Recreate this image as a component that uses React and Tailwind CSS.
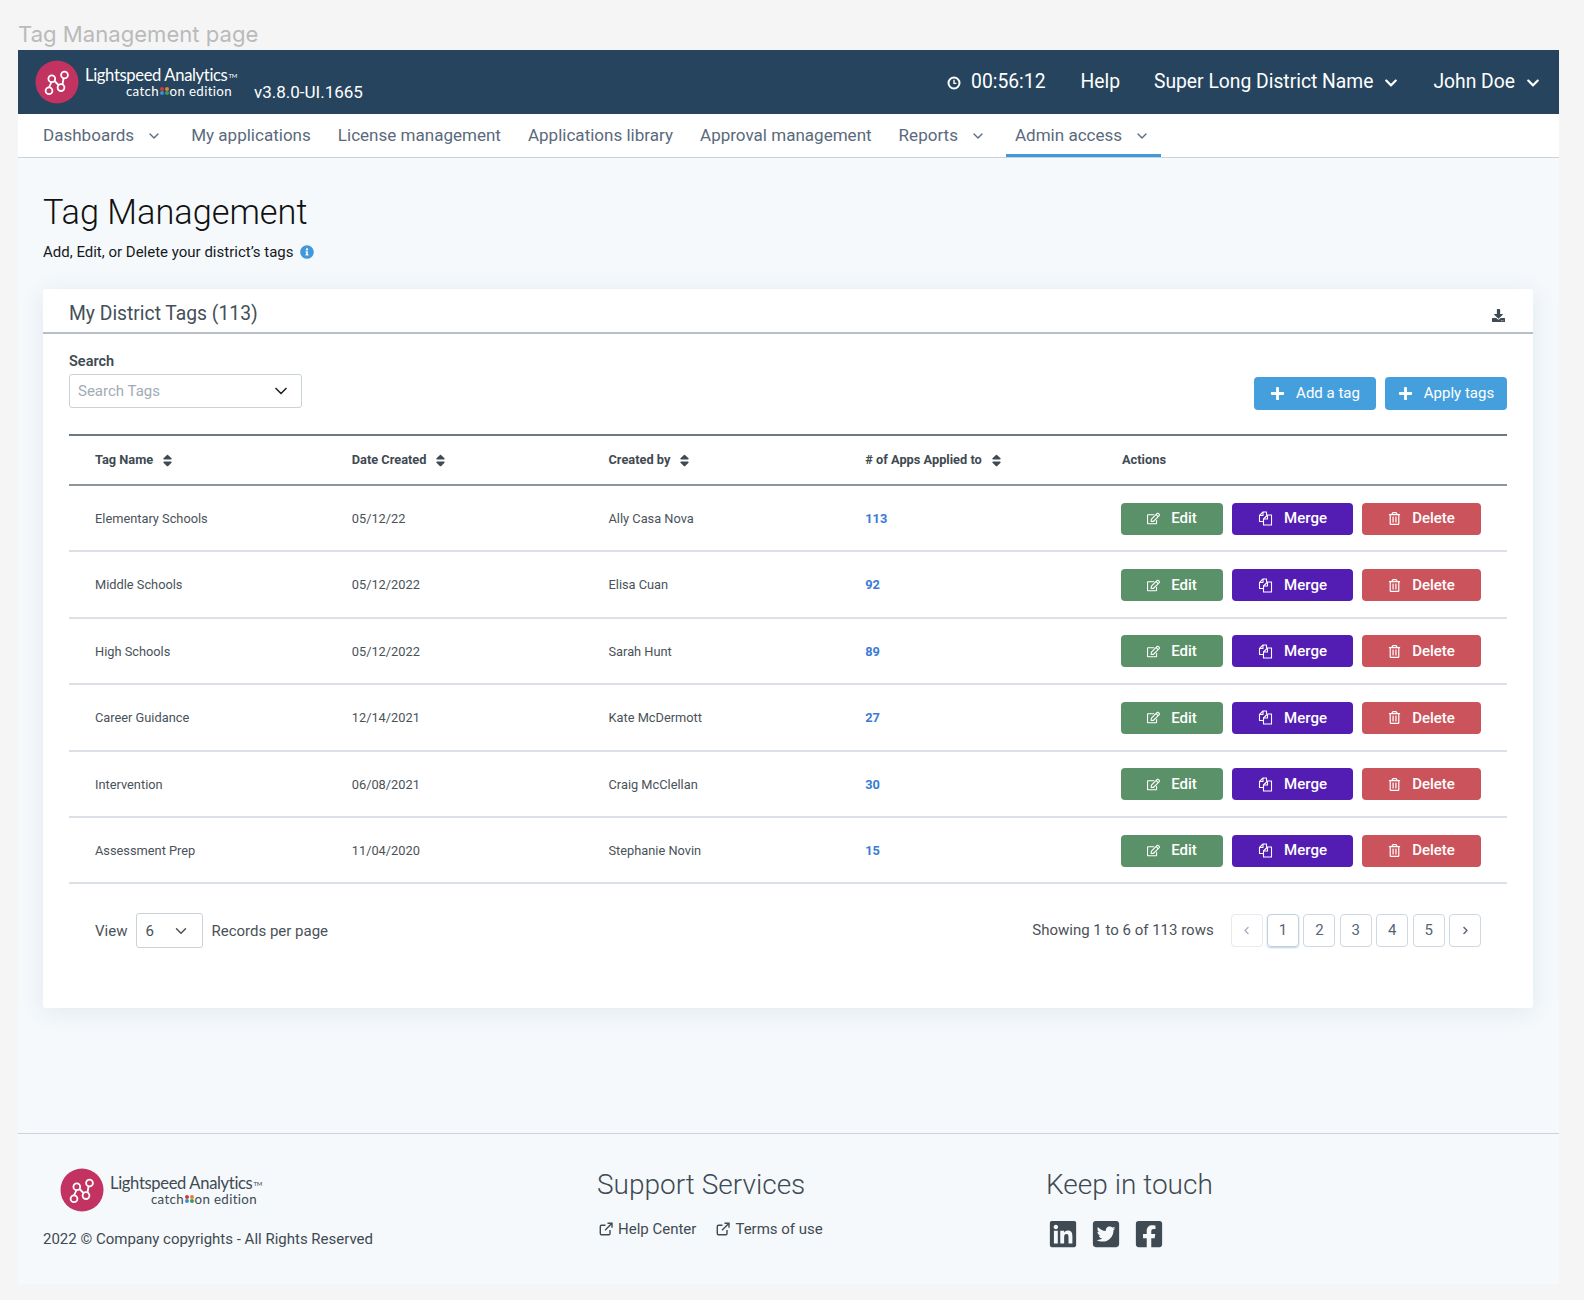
import React from "react";
import { ChevronDown } from "lucide-react";
import {
  FaChevronDown,
  FaChevronLeft,
  FaChevronRight,
  FaDownload,
  FaFacebookSquare,
  FaInfoCircle,
  FaLinkedin,
  FaPlus,
  FaRegEdit,
  FaRegTrashAlt,
  FaSort,
  FaTwitterSquare,
} from "react-icons/fa";

const rows = [
  ["Elementary Schools", "05/12/22", "Ally Casa Nova", "113"],
  ["Middle Schools", "05/12/2022", "Elisa Cuan", "92"],
  ["High Schools", "05/12/2022", "Sarah Hunt", "89"],
  ["Career Guidance", "12/14/2021", "Kate McDermott", "27"],
  ["Intervention", "06/08/2021", "Craig McClellan", "30"],
  ["Assessment Prep", "11/04/2020", "Stephanie Novin", "15"],
];

const Logo = ({ dark }) => (
  <div className="flex items-start">
    <svg width="44" height="44" viewBox="0 0 44 44" className="shrink-0">
      <circle cx="22" cy="22" r="21.5" fill="#c23361" />
      <g fill="none" stroke="#fff" strokeWidth="1.8">
        <path d="M16.5 22L14 27.5M19.5 21L23.5 25M27.5 24.5L28.5 18.5" />
        <circle cx="16.8" cy="18.7" r="3.4" />
        <circle cx="29.5" cy="15" r="3.4" />
        <circle cx="26" cy="27.6" r="3.4" />
        <circle cx="14" cy="30.7" r="3.4" />
      </g>
    </svg>
    <div className={`ml-[6px] mt-[6px] w-[160px] font-['Lato',sans-serif] ${dark ? "text-[#3f4a52]" : "text-white"}`}>
      <div className="text-[16.6px] leading-[18px] tracking-[-0.35px] whitespace-nowrap">
        Lightspeed Analytics<sup className="text-[6px] ml-px">TM</sup>
      </div>
      <div className="flex items-center justify-end pr-[13px] text-[13.3px] leading-[14px] tracking-[0.35px] whitespace-nowrap">
        catch
        <span className="grid grid-cols-2 gap-[0.5px] mx-px">
          <span className="w-[4px] h-[4px] rounded-full bg-[#cf3d3d]" />
          <span className="w-[4px] h-[4px] rounded-full bg-[#e2812f]" />
          <span className="w-[4px] h-[4px] rounded-full bg-[#3b8ed0]" />
          <span className="w-[4px] h-[4px] rounded-full bg-[#3f9a5c]" />
        </span>
        on edition
      </div>
    </div>
  </div>
);

const NavItem = ({ label, caret, active }) => (
  <div
    className={`h-full flex items-center pt-[4px] px-[9px] border-b-[3px] ${
      active ? "border-[#4299d9]" : "border-transparent"
    }`}
  >
    <span className="whitespace-nowrap">{label}</span>
    {caret && <ChevronDown size={16} strokeWidth={2} className="ml-[12px] mr-[2px]" />}
  </div>
);

const SortHead = ({ label }) => (
  <div className="flex items-center pl-[26px] font-bold">
    {label}
    <FaSort className="ml-[7px] text-[#3f4a52]" size={15} />
  </div>
);

const ClockIcon = () => (
  <svg width="14" height="14" viewBox="0 0 14 14" fill="none" stroke="#fff" strokeWidth="2">
    <circle cx="7" cy="7" r="5.5" />
    <path d="M7 3.8V7.4H9.4" strokeWidth="1.4" />
  </svg>
);

const MergeIcon = () => (
  <svg width="15" height="15" viewBox="0 0 15 15" fill="none" stroke="#fff" strokeWidth="1.1" strokeLinejoin="round">
    <path d="M8.5 4V1H5L1.5 4.5V10.5H5.5" />
    <path d="M5 1V4.5H1.5" />
    <path d="M9.5 4H13.5V14H5.5V8Z" />
    <path d="M9.5 4V8H5.5" />
  </svg>
);

const LinkIcon = () => (
  <svg width="14" height="14" viewBox="0 0 14 14" fill="none" stroke="#3f4a52" strokeWidth="1.4">
    <path d="M11 8V11.5A1.2 1.2 0 0 1 9.8 12.7H2.5A1.2 1.2 0 0 1 1.3 11.5V4.5A1.2 1.2 0 0 1 2.5 3.3H6.5" />
    <path d="M8.5 1.3H13V5.8M13 1.3L6 8.3" />
  </svg>
);

const ActionButton = ({ icon, label, className }) => (
  <button className={`h-[32px] flex items-center justify-center rounded-[4px] text-white text-[15px] font-medium ${className}`}>
    {icon}
    <span className="ml-[11px]">{label}</span>
  </button>
);

const PageButton = ({ children, muted, current }) => (
  <div
    className={`w-[32px] h-[33px] flex items-center justify-center rounded-[4px] border text-[15px] ${
      muted
        ? "border-[#e4eaf0] text-[#a9b4c0]"
        : current
        ? "border-[#bfd0e0] text-[#566476] shadow-[0_1px_2px_#bcd0e4]"
        : "border-[#cfd8e1] text-[#566476]"
    }`}
  >
    {children}
  </div>
);

export default function App() {
  return (
    <div className="min-h-[1300px] bg-[#f5f5f5] pl-[18px] pr-[25px] pb-[16px] font-['Roboto',sans-serif]">
      <div className="h-[50px] pt-[19px] text-[22.1px] leading-[30px] text-[#bababa] font-['Inter',sans-serif]">
        Tag Management page
      </div>

      <header className="h-[64px] bg-[#26445e] flex items-center justify-between pl-[17px] pr-[19px] text-white">
        <div className="flex items-center">
          <Logo />
          <span className="ml-[9px] mt-[21px] text-[17px] whitespace-nowrap">v3.8.0-UI.1665</span>
        </div>
        <div className="flex items-center text-[19.3px] pt-[1px]">
          <ClockIcon />
          <span className="ml-[10px]">00:56:12</span>
          <span className="ml-[35px]">Help</span>
          <span className="ml-[34px]">Super Long District Name</span>
          <FaChevronDown size={14} className="ml-[11px]" />
          <span className="ml-[35px]">John Doe</span>
          <FaChevronDown size={14} className="ml-[11px]" />
        </div>
      </header>

      <nav className="h-[44px] bg-white border-b border-[#c9d3dc] flex items-center gap-[9px] pl-[16px] text-[17.05px] text-[#5a6a7c]">
        <NavItem label="Dashboards" caret />
        <NavItem label="My applications" />
        <NavItem label="License management" />
        <NavItem label="Applications library" />
        <NavItem label="Approval management" />
        <NavItem label="Reports" caret />
        <NavItem label="Admin access" caret active />
      </nav>

      <main className="bg-[#f5f9fc] pl-[25px] pr-[26px] pt-[33px] h-[975px]">
        <h1 className="text-[34.3px] leading-[42px] font-light text-[#111]">Tag Management</h1>
        <div className="mt-[8px] h-[22px] flex items-center text-[15px] text-[#16191c]">
          Add, Edit, or Delete your district’s tags
          <FaInfoCircle size={14} className="ml-[6px] text-[#4299d9]" />
        </div>

        <section className="mt-[26px] h-[719px] bg-white rounded-[3px] shadow-[0_4px_24px_rgba(40,70,100,0.09)]">
          <div className="h-[45px] border-b-2 border-[#b9bfc6] px-[26px] flex items-center justify-between">
            <h2 className="text-[19.3px] pt-[7px] text-[#454f58]">My District Tags (113)</h2>
            <FaDownload size={13} className="text-[#3f4a52] mt-[10px] mr-[2px]" />
          </div>

          <div className="px-[26px]">
            <div className="flex justify-between items-end pt-[19px]">
              <div>
                <div className="text-[14.5px] leading-[17px] font-semibold text-[#3f4a52]">Search</div>
                <div className="mt-[4px] w-[233px] h-[34px] border border-[#c9d1d9] rounded-[3px] flex items-center justify-between pl-[8px] pr-[10px]">
                  <span className="text-[15px] text-[#a2abb5]">Search Tags</span>
                  <ChevronDown size={20} className="text-[#22272b]" />
                </div>
              </div>
              <div className="flex gap-[9px] -mb-[2px]">
                <button className="w-[122px] h-[33px] rounded-[4px] bg-[#469fdd] text-white text-[15px] flex items-center justify-center">
                  <FaPlus size={15} />
                  <span className="ml-[11px]">Add a tag</span>
                </button>
                <button className="w-[122px] h-[33px] rounded-[4px] bg-[#469fdd] text-white text-[15px] flex items-center justify-center">
                  <FaPlus size={15} />
                  <span className="ml-[11px]">Apply tags</span>
                </button>
              </div>
            </div>

            <div className="mt-[26px] text-[12.8px] text-[#4a5259]">
              <div className="h-[52px] grid grid-cols-[256.75px_256.75px_256.75px_256.75px_1fr] items-center border-t-2 border-b-2 border-t-[#6f7880] border-b-[#8d959d] text-[#3f4a52]">
                <SortHead label="Tag Name" />
                <SortHead label="Date Created" />
                <SortHead label="Created by" />
                <SortHead label="# of Apps Applied to" />
                <div className="pl-[26px] font-bold">Actions</div>
              </div>
              {rows.map((row) => (
                <div
                  key={row[0]}
                  className="h-[66.4px] pt-[1px] grid grid-cols-[256.75px_256.75px_256.75px_256.75px_1fr] items-center border-b-2 border-[#dbe1e7]"
                >
                  <div className="pl-[26px]">{row[0]}</div>
                  <div className="pl-[26px]">{row[1]}</div>
                  <div className="pl-[26px]">{row[2]}</div>
                  <div className="pl-[26px] font-bold text-[#3a7bd5]">{row[3]}</div>
                  <div className="pl-[25px] flex gap-[9px]">
                    <ActionButton className="w-[102px] bg-[#5a9169]" icon={<FaRegEdit size={13} />} label="Edit" />
                    <ActionButton className="w-[121px] bg-[#531cb3]" icon={<MergeIcon />} label="Merge" />
                    <ActionButton className="w-[119px] bg-[#cb545c]" icon={<FaRegTrashAlt size={13} />} label="Delete" />
                  </div>
                </div>
              ))}
            </div>

            <div className="mt-[29px] pl-[26px] pr-[26px] flex items-center justify-between text-[15px] text-[#4a5259]">
              <div className="flex items-center">
                View
                <div className="ml-[9px] w-[67px] h-[35px] border border-[#c9d1d9] rounded-[3px] flex items-center justify-between pl-[8px] pr-[12px]">
                  6
                  <ChevronDown size={18} />
                </div>
                <span className="ml-[8px]">Records per page</span>
              </div>
              <div className="flex items-center -mt-[1px]">
                <span className="mr-[17px]">Showing 1 to 6 of 113 rows</span>
                <div className="flex gap-[4.4px]">
                  <PageButton muted><FaChevronLeft size={9} /></PageButton>
                  <PageButton current>1</PageButton>
                  <PageButton>2</PageButton>
                  <PageButton>3</PageButton>
                  <PageButton>4</PageButton>
                  <PageButton>5</PageButton>
                  <PageButton><FaChevronRight size={9} /></PageButton>
                </div>
              </div>
            </div>
          </div>
        </section>
      </main>

      <footer className="h-[151px] bg-[#f5f9fc] border-t border-[#ccd3da] px-[25px] flex text-[#3f4a52]">
        <div className="w-[554px] pt-[34px]">
          <div className="ml-[17px]">
            <Logo dark />
          </div>
          <div className="mt-[16px] text-[15px] whitespace-nowrap">2022 © Company copyrights - All Rights Reserved</div>
        </div>
        <div className="w-[449px] pt-[33px]">
          <h3 className="text-[28px] leading-[36px] font-light">Support Services</h3>
          <div className="mt-[15px] flex items-center text-[15px] ml-[2px]">
            <LinkIcon />
            <span className="ml-[5px]">Help Center</span>
            <span className="ml-[20px]"><LinkIcon /></span>
            <span className="ml-[5px]">Terms of use</span>
          </div>
        </div>
        <div className="pt-[33px]">
          <h3 className="text-[28px] leading-[36px] font-light">Keep in touch</h3>
          <div className="mt-[16px] flex gap-[13px] ml-[2px]">
            <FaLinkedin size={30} />
            <FaTwitterSquare size={30} />
            <FaFacebookSquare size={30} />
          </div>
        </div>
      </footer>
    </div>
  );
}
